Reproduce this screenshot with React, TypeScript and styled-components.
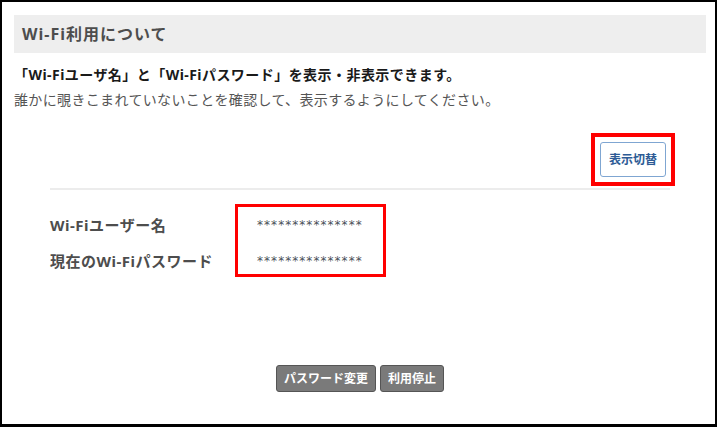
import styled, { createGlobalStyle } from "styled-components";

const GlobalStyle = createGlobalStyle`
  html, body { margin: 0; padding: 0; background: #fff; }
  body { font-family: "Noto Sans", "Noto Sans CJK JP", sans-serif; }
  * { box-sizing: border-box; }
`;

const jp = `"Noto Sans", "Noto Sans CJK JP", sans-serif`;

const Frame = styled.div`
  width: 717px;
  height: 427px;
  border: 2px solid #000;
  border-bottom-width: 3px;
  padding: 13px 9px 0 12px;
  background: #fff;
`;

const Header = styled.h1`
  margin: 0;
  height: 38px;
  display: flex;
  align-items: center;
  padding-left: 8px;
  background: #eeeeee;
  font: 700 16px/1 ${jp};
  letter-spacing: 1px;
  color: #4d4d4d;
`;

const Lead = styled.p`
  margin: 9px 0 0;
  font: 700 14px/25px ${jp};
  letter-spacing: 0.45px;
  color: #1a1a1a;
`;

const Note = styled.p`
  margin: 0;
  font: 400 14px/25px ${jp};
  letter-spacing: 0.35px;
  color: #555;
`;

const ToggleRow = styled.div`
  display: flex;
  justify-content: flex-end;
  margin-top: 21px;
  padding-right: 31px;
`;

const Highlight = styled.div<{ $w: number; $pad: string }>`
  border: ${(p) => p.$w}px solid #ff0000;
  padding: ${(p) => p.$pad};
`;

const ToggleButton = styled.button`
  height: 35px;
  padding: 0 8px;
  border: 1px solid #7fa6d2;
  border-radius: 3px;
  background: #fff;
  color: #2d5b95;
  font: 700 12px/1 ${jp};
  cursor: pointer;
`;

const Divider = styled.hr`
  margin: 2px 36px 0;
  border: 0;
  height: 2px;
  background: #ececec;
`;

const InfoArea = styled.div`
  display: flex;
  align-items: flex-start;
  margin-top: 14px;
  padding-left: 36px;
`;

const Labels = styled.div`
  width: 185px;
  margin-top: 3px;
  display: grid;
  grid-auto-rows: 36px;
`;

const Label = styled.div`
  font: 700 15px/36px ${jp};
  letter-spacing: 0.5px;
  color: #4d4d4d;
`;

const Values = styled(Highlight)`
  width: 151px;
  height: 73px;
  display: grid;
  grid-auto-rows: 36px;
  align-content: start;
`;

const Masked = styled.div`
  font: 400 12px/36px "DejaVu Sans", sans-serif;
  letter-spacing: 1.05px;
  color: #4a4f58;
  white-space: nowrap;
`;

const Actions = styled.div`
  display: flex;
  justify-content: center;
  gap: 4px;
  margin-top: 86px;
`;

const ActionButton = styled.button`
  height: 27px;
  padding: 0 7px;
  border: 1px solid #555;
  border-radius: 3px;
  background: #7a7a7a;
  color: #fff;
  font: 700 12px/1 ${jp};
  cursor: pointer;
`;

const rows = [
  { label: "Wi-Fiユーザー名", value: "***************" },
  { label: "現在のWi-Fiパスワード", value: "***************" },
];

export default function App() {
  return (
    <>
      <GlobalStyle />
      <Frame>
        <Header>Wi-Fi利用について</Header>
        <Lead>「Wi-Fiユーザ名」と「Wi-Fiパスワード」を表示・非表示できます。</Lead>
        <Note>誰かに覗きこまれていないことを確認して、表示するようにしてください。</Note>
        <ToggleRow>
          <Highlight $w={4} $pad="5px">
            <ToggleButton>表示切替</ToggleButton>
          </Highlight>
        </ToggleRow>
        <Divider />
        <InfoArea>
          <Labels>
            {rows.map((r) => (
              <Label key={r.label}>{r.label}</Label>
            ))}
          </Labels>
          <Values $w={3} $pad="0 0 0 19px">
            {rows.map((r) => (
              <Masked key={r.label}>{r.value}</Masked>
            ))}
          </Values>
        </InfoArea>
        <Actions>
          <ActionButton>パスワード変更</ActionButton>
          <ActionButton>利用停止</ActionButton>
        </Actions>
      </Frame>
    </>
  );
}
